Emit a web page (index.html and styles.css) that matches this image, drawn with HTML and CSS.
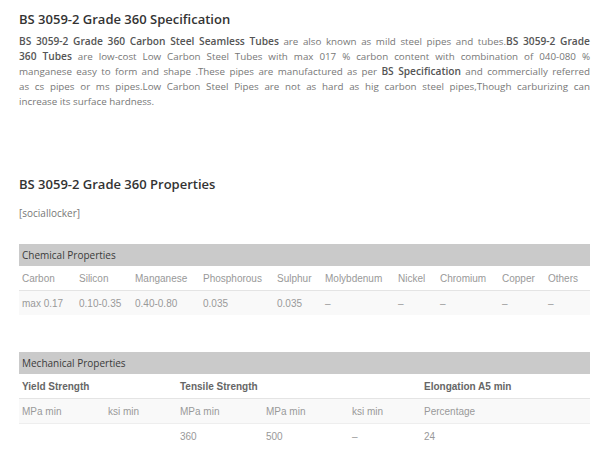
FILE: index.html
```html
<!DOCTYPE html>
<html>
<head>
<meta charset="utf-8">
<link rel="stylesheet" href="styles.css">
</head>
<body>
<div class="page">
  <h2 class="title">BS 3059-2 Grade 360 Specification</h2>
  <p class="intro"><span class="ln"><b>BS 3059-2 Grade 360 Carbon Steel Seamless Tubes</b> are also known as mild steel pipes and tubes.<b>BS 3059-2 Grade</b></span><span class="ln"><b>360 Tubes</b> are low-cost Low Carbon Steel Tubes with max 017 % carbon content with combination of 040-080 %</span><span class="ln">manganese easy to form and shape .These pipes are manufactured as per <b>BS Specification</b> and commercially referred</span><span class="ln">as cs pipes or ms pipes.Low Carbon Steel Pipes are not as hard as hig carbon steel pipes,Though carburizing can</span><span class="last">increase its surface hardness.</span></p>

  <h2 class="title title2">BS 3059-2 Grade 360 Properties</h2>
  <p class="locker">[sociallocker]</p>

  <table class="tbl chem">
    <colgroup>
      <col class="c1"><col class="c2"><col class="c3"><col class="c4"><col class="c5">
      <col class="c6"><col class="c7"><col class="c8"><col class="c9"><col class="c10">
    </colgroup>
    <tr class="bar"><td colspan="10">Chemical Properties</td></tr>
    <tr class="head">
      <td>Carbon</td><td>Silicon</td><td>Manganese</td><td>Phosphorous</td><td>Sulphur</td>
      <td>Molybdenum</td><td>Nickel</td><td>Chromium</td><td>Copper</td><td>Others</td>
    </tr>
    <tr class="shade">
      <td>max 0.17</td><td>0.10-0.35</td><td>0.40-0.80</td><td>0.035</td><td>0.035</td>
      <td>–</td><td>–</td><td>–</td><td>–</td><td>–</td>
    </tr>
  </table>

  <table class="tbl mech">
    <colgroup>
      <col class="m1"><col class="m2"><col class="m3"><col class="m4"><col class="m5"><col class="m6">
    </colgroup>
    <tr class="bar"><td colspan="6">Mechanical Properties</td></tr>
    <tr class="bold">
      <td colspan="2">Yield Strength</td><td colspan="3">Tensile Strength</td><td>Elongation A5 min</td>
    </tr>
    <tr class="shade line">
      <td>MPa min</td><td>ksi min</td><td>MPa min</td><td>MPa min</td><td>ksi min</td><td>Percentage</td>
    </tr>
    <tr class="line">
      <td></td><td></td><td>360</td><td>500</td><td>–</td><td>24</td>
    </tr>
  </table>
</div>
</body>
</html>
```

FILE: styles.css
```css
html, body {
  margin: 0;
  padding: 0;
  background: #fff;
}
.page {
  padding: 10px 10px 0 19px;
  width: 571px;
  font-family: "Open Sans", sans-serif;
}
.title {
  margin: 0;
  font-size: 13px;
  font-weight: 600;
  color: #333;
  line-height: 18px;
}
.intro {
  margin: 6px 0 0;
  font-size: 9.8px;
  line-height: 15px;
  color: #777;
}
.intro .ln {
  display: block;
  white-space: nowrap;
  text-align: justify;
  text-align-last: justify;
}
.intro .last {
  display: block;
}
.intro b {
  font-size: 10.2px;
  font-weight: 600;
  color: #555;
}
.title2 {
  margin-top: 66px;
}
.locker {
  margin: 13px 0 0;
  font-size: 10px;
  line-height: 15px;
  color: #777;
}
.tbl {
  width: 571px;
  border-collapse: collapse;
  table-layout: fixed;
  font-family: "Liberation Sans", Arial, sans-serif;
  font-size: 10px;
  color: #999;
}
.tbl td {
  padding: 0 0 0 3px;
  white-space: nowrap;
  overflow: hidden;
}
.chem { margin-top: 23px; }
.mech { margin-top: 37px; }
.bar td {
  background: #cacaca;
  color: #3a3a3a;
  font-family: "Open Sans", sans-serif;
  font-size: 10px;
  height: 22px;
}
.head td { height: 24px; border-bottom: 1px solid #e4e4e4; }
.shade td { background: #f9f9f9; height: 24px; }
.bold td { font-weight: 700; color: #666; height: 24px; border-bottom: 1px solid #e4e4e4; }
.mech .shade td { height: 24px; border-bottom: 1px solid #eee; }
.mech tr:last-child td { height: 25px; }

.c1 { width: 57px; } .c2 { width: 56px; } .c3 { width: 68px; } .c4 { width: 74px; }
.c5 { width: 48px; } .c6 { width: 73px; } .c7 { width: 42px; } .c8 { width: 62px; }
.c9 { width: 46px; } .c10 { width: 45px; }

.m1 { width: 86px; } .m2 { width: 72px; } .m3 { width: 86px; } .m4 { width: 86px; }
.m5 { width: 72px; } .m6 { width: 169px; }
```
